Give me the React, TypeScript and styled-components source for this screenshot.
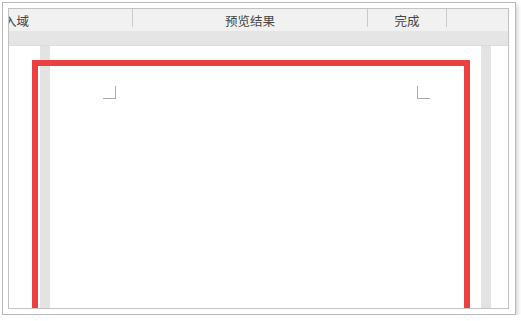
import React from 'react';
import styled, { createGlobalStyle } from 'styled-components';

const GlobalStyle = createGlobalStyle`
  html, body {
    margin: 0;
    padding: 0;
    background: #ffffff;
  }
  body {
    font-family: "Noto Sans CJK SC", "Microsoft YaHei", sans-serif;
  }
`;

// first label is scrolled, so its first glyph sits half under the left edge
const tabs = [
  { label: '入域', width: 123, offset: -5, align: 'flex-start' },
  { label: '预览结果', width: 234, offset: 0, align: 'center' },
  { label: '完成', width: 78, offset: 0, align: 'center' },
];

export default function App() {
  return (
    <>
      <GlobalStyle />
      <Shot>
        <Window>
          <TabBar>
            {tabs.map(tab => (
              <React.Fragment key={tab.label}>
                <Tab $width={tab.width} $align={tab.align}>
                  <TabLabel $offset={tab.offset}>{tab.label}</TabLabel>
                </Tab>
                <TabDivider />
              </React.Fragment>
            ))}
          </TabBar>
          <Ruler />
          <Workspace>
            <SideGap $width={31} />
            <Gutter />
            <Page>
              <Marks>
                <CropMark $side="left" />
                <CropMark $side="right" />
              </Marks>
            </Page>
            <Gutter />
            <SideGap $width={17} />
          </Workspace>
          <Highlight />
        </Window>
      </Shot>
    </>
  );
}

const Shot = styled.div`
  box-sizing: border-box;
  margin: 2px 0 0 2px;
  width: 514px;
  height: 313px;
  padding: 5px 6px 5px 5px;
  border: 1px solid #b9b9b9;
  box-shadow: 2px 3px 4px rgba(0, 0, 0, 0.16);
  background: #ffffff;
`;

const Window = styled.div`
  position: relative;
  box-sizing: border-box;
  width: 501px;
  height: 301px;
  border: 1px solid #c2c2c2;
  overflow: hidden;
  display: flex;
  flex-direction: column;
  background: #ffffff;
`;

const TabBar = styled.div`
  display: flex;
  align-items: flex-start;
  height: 22px;
  background: #f1f1f1;
  flex-shrink: 0;
`;

const Tab = styled.div<{ $width: number; $align: string }>`
  width: ${p => p.$width}px;
  height: 22px;
  display: flex;
  align-items: center;
  justify-content: ${p => p.$align};
  overflow: hidden;
  font-size: 12.5px;
  color: #444444;
  white-space: nowrap;
`;

const TabLabel = styled.span<{ $offset: number }>`
  margin-left: ${p => p.$offset}px;
  line-height: 1;
  padding-top: 3px;
`;

const TabDivider = styled.div`
  width: 1px;
  height: 18px;
  background: #c9c9c9;
`;

const Ruler = styled.div`
  height: 14px;
  background: #e5e5e5;
  border-bottom: 1px solid #dcdcdc;
  flex-shrink: 0;
`;

const Workspace = styled.div`
  flex: 1;
  display: flex;
  min-height: 0;
`;

const SideGap = styled.div<{ $width: number }>`
  width: ${p => p.$width}px;
  background: #ffffff;
  flex-shrink: 0;
`;

const Gutter = styled.div`
  width: 10px;
  background: #e3e3e3;
  flex-shrink: 0;
`;

const Page = styled.div`
  width: 431px;
  flex-shrink: 0;
  background: #ffffff;
`;

const Marks = styled.div`
  display: flex;
  justify-content: space-between;
  padding: 40px 51px 0 53px;
`;

const CropMark = styled.div<{ $side: 'left' | 'right' }>`
  box-sizing: border-box;
  width: 13px;
  height: 13px;
  border-bottom: 1px solid #a9a9a9;
  ${p =>
    p.$side === 'left'
      ? 'border-right: 1px solid #a9a9a9;'
      : 'border-left: 1px solid #a9a9a9;'}
`;

const Highlight = styled.div`
  position: absolute;
  left: 23px;
  top: 51px;
  width: 438px;
  height: 300px;
  box-sizing: border-box;
  border: 6px solid #ea4042;
  pointer-events: none;
`;
